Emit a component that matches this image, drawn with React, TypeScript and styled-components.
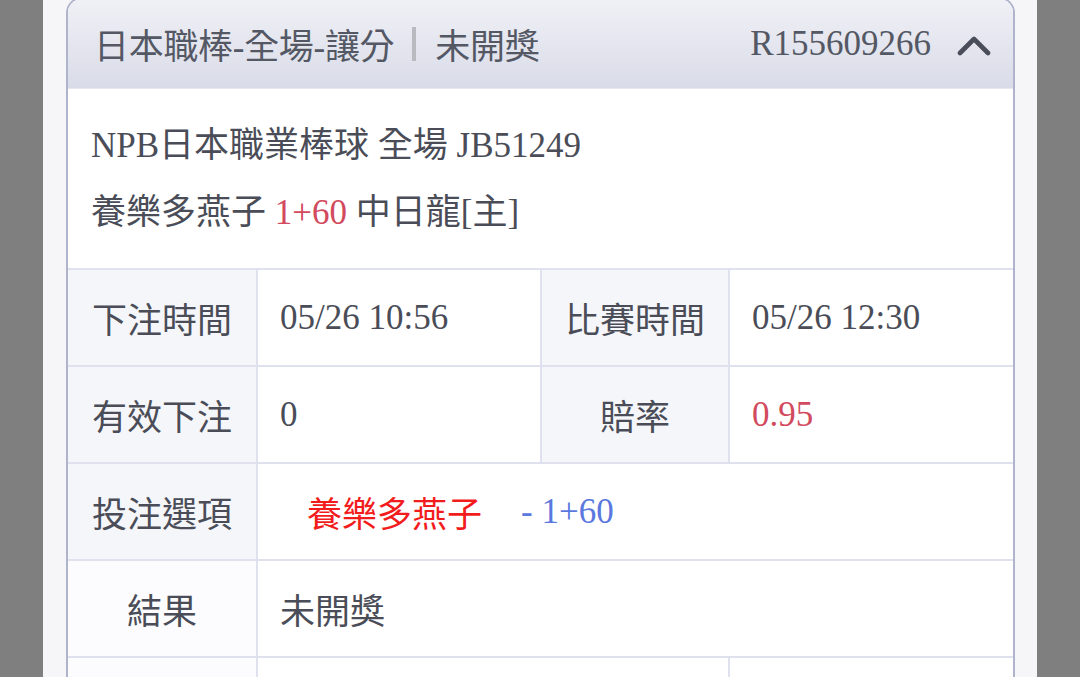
import React from "react";
import styled, { createGlobalStyle } from "styled-components";

const Global = createGlobalStyle`
  html, body { margin: 0; padding: 0; }
  body {
    background: #7f7f7f;
    font-family: "Liberation Serif", "Noto Sans CJK TC", serif;
    overflow: hidden;
  }
`;

const Page = styled.div`
  display: flex;
  width: 1080px;
  height: 677px;
  overflow: hidden;
`;

const Side = styled.div`
  width: 43px;
  flex: none;
  background: #7f7f7f;
`;

const Stage = styled.div`
  flex: 1;
  background: #f6f6f8;
  padding: 0 22px 0 23px;
`;

const Card = styled.div`
  margin-top: -3px;
  background: #ffffff;
  border: 2px solid #afb3cb;
  border-bottom: none;
  border-radius: 16px 16px 0 0;
  overflow: hidden;
`;

const Header = styled.div`
  height: 89px;
  display: flex;
  align-items: center;
  padding: 0 22px 0 26px;
  background: linear-gradient(#f0f1f6, #d9dbe8);
  border-bottom: 1px solid #e6e7ef;
  color: #545864;
  font-size: 35px;
`;

const Title = styled.span`
  letter-spacing: -0.3px;
`;

const Sep = styled.span`
  display: inline-block;
  width: 4px;
  height: 34px;
  background: #b9b9c0;
  margin: 0 19px 0 18px;
`;

const Spacer = styled.div`
  flex: 1;
`;

const Ticket = styled.span`
  font-family: "Liberation Serif", serif;
  font-size: 35px;
  margin-right: 26px;
`;

const Intro = styled.div`
  padding: 23px 23px 22px;
  color: #4a4d57;
  font-size: 35px;
  line-height: 67px;
`;

const Line = styled.div`
  white-space: nowrap;
`;

const Hot = styled.span<{ $tone: "rose" | "red" | "blue" }>`
  color: ${(p) =>
    p.$tone === "rose" ? "#d24a5d" : p.$tone === "red" ? "#f21c1c" : "#5b78de"};
`;

const Table = styled.div`
  display: grid;
  grid-template-columns: 188px 282px 186px 1fr;
  grid-auto-rows: 95px;
  gap: 2px;
  background: #dfe1ee;
  border-top: 2px solid #dfe1ee;
`;

const Label = styled.div<{ $plain?: boolean }>`
  display: flex;
  align-items: center;
  justify-content: center;
  background: ${(p) => (p.$plain ? "#fcfcfe" : "#f5f6fa")};
  color: #4a4d57;
  font-size: 35px;
`;

const Value = styled.div<{ $span?: number; $indent?: number }>`
  display: flex;
  align-items: center;
  grid-column: span ${(p) => p.$span ?? 1};
  background: #ffffff;
  color: #4a4d57;
  font-size: 35px;
  padding-left: ${(p) => p.$indent ?? 22}px;
  white-space: nowrap;
`;

const Gap = styled.span`
  display: inline-block;
  width: 39px;
`;

const Chevron = () => (
  <svg width="34" height="24" viewBox="0 0 34 24" aria-hidden="true">
    <polyline
      points="3,21 17,7 31,21"
      fill="none"
      stroke="#4a4e5a"
      strokeWidth="4.6"
      strokeLinecap="round"
      strokeLinejoin="round"
    />
  </svg>
);

export default function App() {
  return (
    <>
      <Global />
      <Page>
        <Side />
        <Stage>
          <Card>
            <Header>
              <Title>日本職棒-全場-讓分</Title>
              <Sep />
              <Title>未開獎</Title>
              <Spacer />
              <Ticket>R155609266</Ticket>
              <Chevron />
            </Header>
            <Intro>
              <Line>NPB日本職業棒球 全場 JB51249</Line>
              <Line>
                養樂多燕子 <Hot $tone="rose">1+60</Hot> 中日龍[主]
              </Line>
            </Intro>
            <Table>
              <Label>下注時間</Label>
              <Value>05/26 10:56</Value>
              <Label>比賽時間</Label>
              <Value>05/26 12:30</Value>

              <Label>有效下注</Label>
              <Value>0</Value>
              <Label>賠率</Label>
              <Value>
                <Hot $tone="rose">0.95</Hot>
              </Value>

              <Label>投注選項</Label>
              <Value $span={3} $indent={49}>
                <Hot $tone="red">養樂多燕子</Hot>
                <Gap />
                <Hot $tone="blue">- 1+60</Hot>
              </Value>

              <Label $plain>結果</Label>
              <Value $span={3}>未開獎</Value>

              <Label $plain />
              <Value $span={2} />
              <Value />
            </Table>
          </Card>
        </Stage>
        <Side />
      </Page>
    </>
  );
}
